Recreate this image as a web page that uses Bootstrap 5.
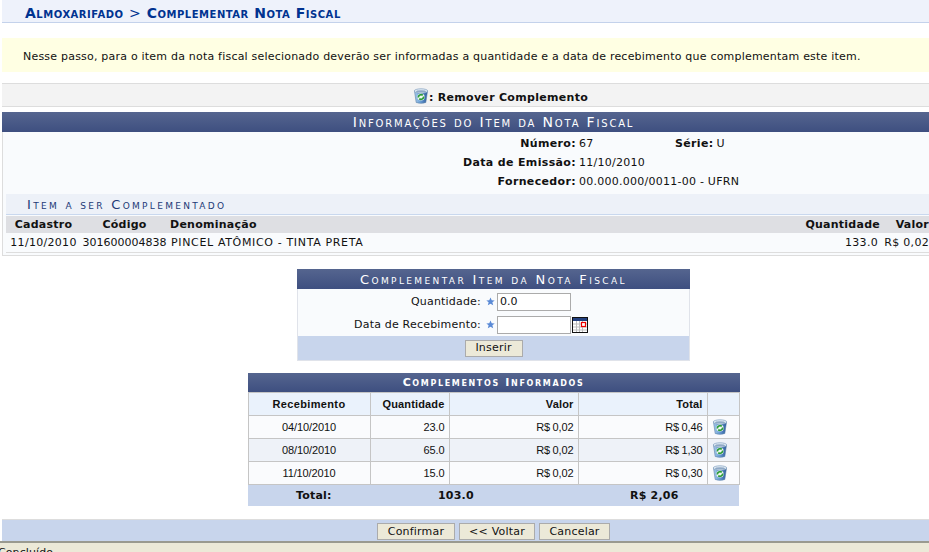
<!DOCTYPE html>
<html lang="pt-BR">
<head>
<meta charset="utf-8">
<title>Complementar Nota Fiscal</title>
<link href="https://cdn.jsdelivr.net/npm/bootstrap@5.3.0/dist/css/bootstrap.min.css" rel="stylesheet">
<style>
html,body{height:552px;overflow:hidden;}
body{background:#fff;color:#111;font:11px/13px "DejaVu Sans",Verdana,sans-serif;}
.pg{padding-left:2px;width:985px;}
.crumb{height:23px;background:#EEF2FB;border-bottom:1px solid #C4D2EB;padding:6px 0 0 23px;color:#003390;font-weight:700;font-size:14px;font-variant:small-caps;line-height:14px;letter-spacing:.52px;}
.crumb .sep{font-weight:400;}
.hint{height:34px;margin-top:15px;background:#FFFFE3;padding:12px 0 0 21px;font-size:11px;letter-spacing:.21px;}
.tools{height:24px;margin-top:11px;padding-left:14px;background:#F3F3F3;border-top:1px solid #DDD;border-bottom:1px solid #DDD;font-weight:700;letter-spacing:.3px;}
.tools span{padding-top:5px;}
.tools .ico{margin-top:2px;}
.capbar{background:linear-gradient(#55658F,#3E4F80);color:#fff;text-align:center;font-variant:small-caps;font-weight:400;}
.capbar.big{height:20px;margin-top:5px;font-size:14px;line-height:21px;letter-spacing:1.82px;}
.outer{border:1px solid #DDD;border-top:0;background:#F9FBFD;height:124px;}
.inforow{height:19px;line-height:19px;}
.inforow b{display:inline-block;width:573px;text-align:right;letter-spacing:.35px;}
.inforow .v{margin-left:3px;letter-spacing:.25px;}
.inforow .gap{width:96px;}
.inforow b.auto{width:auto;}
.infotop{padding-top:2px;height:62px;}
.sub{height:21px;background:#EDF1F8;border-bottom:1px solid #C9D8EE;margin:0 3px;padding:3px 0 0 21px;color:#223A77;font-variant:small-caps;font-size:13px;letter-spacing:2.3px;line-height:15px;}
.itab{width:923px;margin:1px 0 0 3px;table-layout:fixed;}
.itab th,.itab td{padding:0;background:transparent;border:0;white-space:nowrap;font-size:11px;vertical-align:middle;color:#111;}
.itab th{background:#DEDFE3;height:17px;font-weight:700;letter-spacing:.25px;}
.itab td{height:19px;border-bottom:1px solid #DDD;letter-spacing:.3px;}
.itab .w1{width:75px;}.itab .w2{width:87px;}.itab .w3{width:634px;}.itab .w4{width:78px;}
.itab th.name{padding-left:2px;}
.itab td.name{padding-left:3px;letter-spacing:.65px;}
.itab td.code{letter-spacing:0;}
.itab td.qty{padding-right:2px;}
.formbox{width:393px;margin:13px auto 0;background:#F9FBFD;border:1px solid #E0E3EA;border-top:0;}
.capbar.mid{height:20px;font-size:13px;line-height:21px;letter-spacing:2.38px;margin:0 -1px 1px;}
.frow{height:23px;display:flex;align-items:center;}
.frow label{width:183px;text-align:right;letter-spacing:.2px;}
.star{width:9px;height:9px;margin:0 2px 0 5px;}
.calic{margin-left:1px;}
.fin{width:74px;height:18px;border:1px solid #ABABAB;background:#fff;padding:0 2px;font:11px "DejaVu Sans",sans-serif;color:#111;border-radius:0;}
.ffoot{height:24px;background:#C8D5EC;display:flex;align-items:center;justify-content:center;}
.bt{background:#ECE9D8;border:1px solid #ABABAB;border-radius:0;font:11px "DejaVu Sans",sans-serif;color:#111;padding:0;height:17px;line-height:14px;letter-spacing:.2px;}
.b0{width:58px;}.b1{width:78px;}.b2{width:76px;}.b3{width:71px;}
.listbox{width:492px;margin:12px auto 0;}
.capbar.small{height:19px;font-size:11px;line-height:20px;letter-spacing:1.65px;font-weight:700;}
.ctab{width:100%;margin:0;table-layout:fixed;border-collapse:collapse;}
.ctab th,.ctab td{padding:0 4px;font:11px "Liberation Sans",Arial,sans-serif;border:1px solid #C5C5C5;height:23px;color:#111;vertical-align:middle;}
.ctab th{background:#EAF2FC;font-weight:700;letter-spacing:.15px;}
.ctab th.rec{letter-spacing:.35px;}
.ctab tbody td{letter-spacing:-.12px;word-spacing:-.4px;}
.ctab tr.odd td{background:#FAFBFD;}
.ctab tr.even td{background:#EEF2F8;}
.ctab .w1{width:122px;}.ctab .w2{width:79px;}.ctab .w3{width:129px;}
.ctab tfoot td{background:#C8D5EC;border:0;border-top:1px solid #C5C5C5;font:700 11px "DejaVu Sans",sans-serif;height:21px;letter-spacing:.2px;}
.ctab tfoot .t1{padding-left:48px;}.ctab tfoot .t2{padding-left:68px;}.ctab tfoot .t3{padding-left:52px;}
.ico{width:16px;height:16px;display:block;}
.barfoot{height:22px;margin-top:13px;background:#C8D5EC;border-top:1px solid #DDD;display:flex;justify-content:center;align-items:center;gap:4px;padding-top:3px;}
.status{height:14px;background:#ECE9D8;border-top:2px solid #9A9A90;padding-top:3px;line-height:13px;text-indent:-2px;letter-spacing:.1px;}
</style>
</head>
<body>
<svg width="0" height="0" class="position-absolute">
<defs>
<linearGradient id="bin" x1="0" x2="1"><stop offset="0" stop-color="#A9CDEB"/><stop offset=".45" stop-color="#6B9FD6"/><stop offset="1" stop-color="#2B5A9B"/></linearGradient>
<symbol id="trash" viewBox="0 0 16 16">
<path d="M1.500 3 L14.500 3 L12.800 14.500 Q8 16.200 3.200 14.500 Z" fill="url(#bin)" stroke="#5B7FA8" stroke-width=".6"/>
<ellipse cx="8" cy="3" rx="6.800" ry="2.200" fill="#E4EEF6" stroke="#7E9DBE" stroke-width=".7"/>
<ellipse cx="8" cy="3.400" rx="5" ry="1.200" fill="#8FA9C6"/>
<circle cx="8" cy="9" r="3.600" fill="#F2F8F2"/>
<path d="M5.300 9.500a2.800 2.800 0 0 1 4.500-2.300M10.700 8.500a2.800 2.800 0 0 1-4.500 2.300" fill="none" stroke="#2C9C38" stroke-width="1.700"/>
</symbol>
<symbol id="stariq" viewBox="0 0 11 11">
<polygon points="5.500,.6 7,4 10.600,4.200 7.800,6.500 8.800,10.200 5.500,8.100 2.200,10.200 3.200,6.500 .4,4.200 4,4" fill="#5A8AD6"/>
</symbol>
</defs>
</svg>
<div class="pg">
<div class="crumb">Almoxarifado <span class="sep">&gt;</span> Complementar Nota Fiscal</div>
<div class="hint">Nesse passo, para o item da nota fiscal selecionado deverão ser informadas a quantidade e a data de recebimento que complementam este item.</div>
<div class="tools d-flex align-items-center justify-content-center">
<svg class="ico"><use href="#trash"/></svg><span>: Remover Complemento</span>
</div>
<div class="capbar big">Informações do Item da Nota Fiscal</div>
<div class="outer">
<div class="infotop">
<div class="inforow d-flex"><b>Número:</b><span class="v gap">67</span><b class="auto">Série:</b><span class="v">U</span></div>
<div class="inforow d-flex"><b>Data de Emissão:</b><span class="v">11/10/2010</span></div>
<div class="inforow d-flex"><b>Fornecedor:</b><span class="v">00.000.000/0011-00 - UFRN</span></div>
</div>
<div class="sub">Item a ser Complementado</div>
<table class="table itab">
<colgroup><col class="w1"><col class="w2"><col class="w3"><col class="w4"><col></colgroup>
<thead><tr><th class="text-center">Cadastro</th><th class="text-center">Código</th><th class="name">Denominação</th><th class="text-end">Quantidade</th><th class="text-end">Valor</th></tr></thead>
<tbody><tr><td class="text-center">11/10/2010</td><td class="text-center code">301600004838</td><td class="name">PINCEL ATÔMICO - TINTA PRETA</td><td class="text-end qty">133.0</td><td class="text-end">R$ 0,02</td></tr></tbody>
</table>
</div>
<div class="formbox">
<div class="capbar mid">Complementar Item da Nota Fiscal</div>
<div class="frow"><label for="q1">Quantidade:</label><svg class="star"><use href="#stariq"/></svg><input id="q1" class="fin" value="0.0"></div>
<div class="frow"><label for="q2">Data de Recebimento:</label><svg class="star"><use href="#stariq"/></svg><input id="q2" class="fin">
<svg width="16" height="16" viewBox="0 0 16 16" class="calic"><rect x=".5" y=".5" width="15" height="15" fill="#fff" stroke="#111"/><rect x="1" y="1" width="14" height="3" fill="#23407F"/><path d="M1 7h14M1 10h14M1 13h14M4.500 4v11M7.500 4v11M10.500 4v11" stroke="#BDBDBD"/><rect x="9.500" y="5.500" width="4" height="4" fill="#fff" stroke="#E00" stroke-width="1.200"/></svg></div>
<div class="ffoot"><button type="button" class="bt b0">Inserir</button></div>
</div>
<div class="listbox">
<div class="capbar small">Complementos Informados</div>
<table class="table ctab">
<colgroup><col class="w1"><col class="w2"><col class="w3"><col class="w3"><col></colgroup>
<thead><tr><th class="text-center rec">Recebimento</th><th class="text-end">Quantidade</th><th class="text-end">Valor</th><th class="text-end">Total</th><th></th></tr></thead>
<tbody>
<tr class="odd"><td class="text-center">04/10/2010</td><td class="text-end">23.0</td><td class="text-end">R$ 0,02</td><td class="text-end">R$ 0,46</td><td class="px-0 ps-1"><svg class="ico"><use href="#trash"/></svg></td></tr>
<tr class="even"><td class="text-center">08/10/2010</td><td class="text-end">65.0</td><td class="text-end">R$ 0,02</td><td class="text-end">R$ 1,30</td><td class="px-0 ps-1"><svg class="ico"><use href="#trash"/></svg></td></tr>
<tr class="odd"><td class="text-center">11/10/2010</td><td class="text-end">15.0</td><td class="text-end">R$ 0,02</td><td class="text-end">R$ 0,30</td><td class="px-0 ps-1"><svg class="ico"><use href="#trash"/></svg></td></tr>
</tbody>
<tfoot><tr><td class="t1">Total:</td><td class="t2" colspan="2">103.0</td><td class="t3" colspan="2">R$ 2,06</td></tr></tfoot>
</table>
</div>
<div class="barfoot"><button type="button" class="bt b1">Confirmar</button><button type="button" class="bt b2">&lt;&lt; Voltar</button><button type="button" class="bt b3">Cancelar</button></div>
</div>
<div class="status">Concluído</div>
</body>
</html>
